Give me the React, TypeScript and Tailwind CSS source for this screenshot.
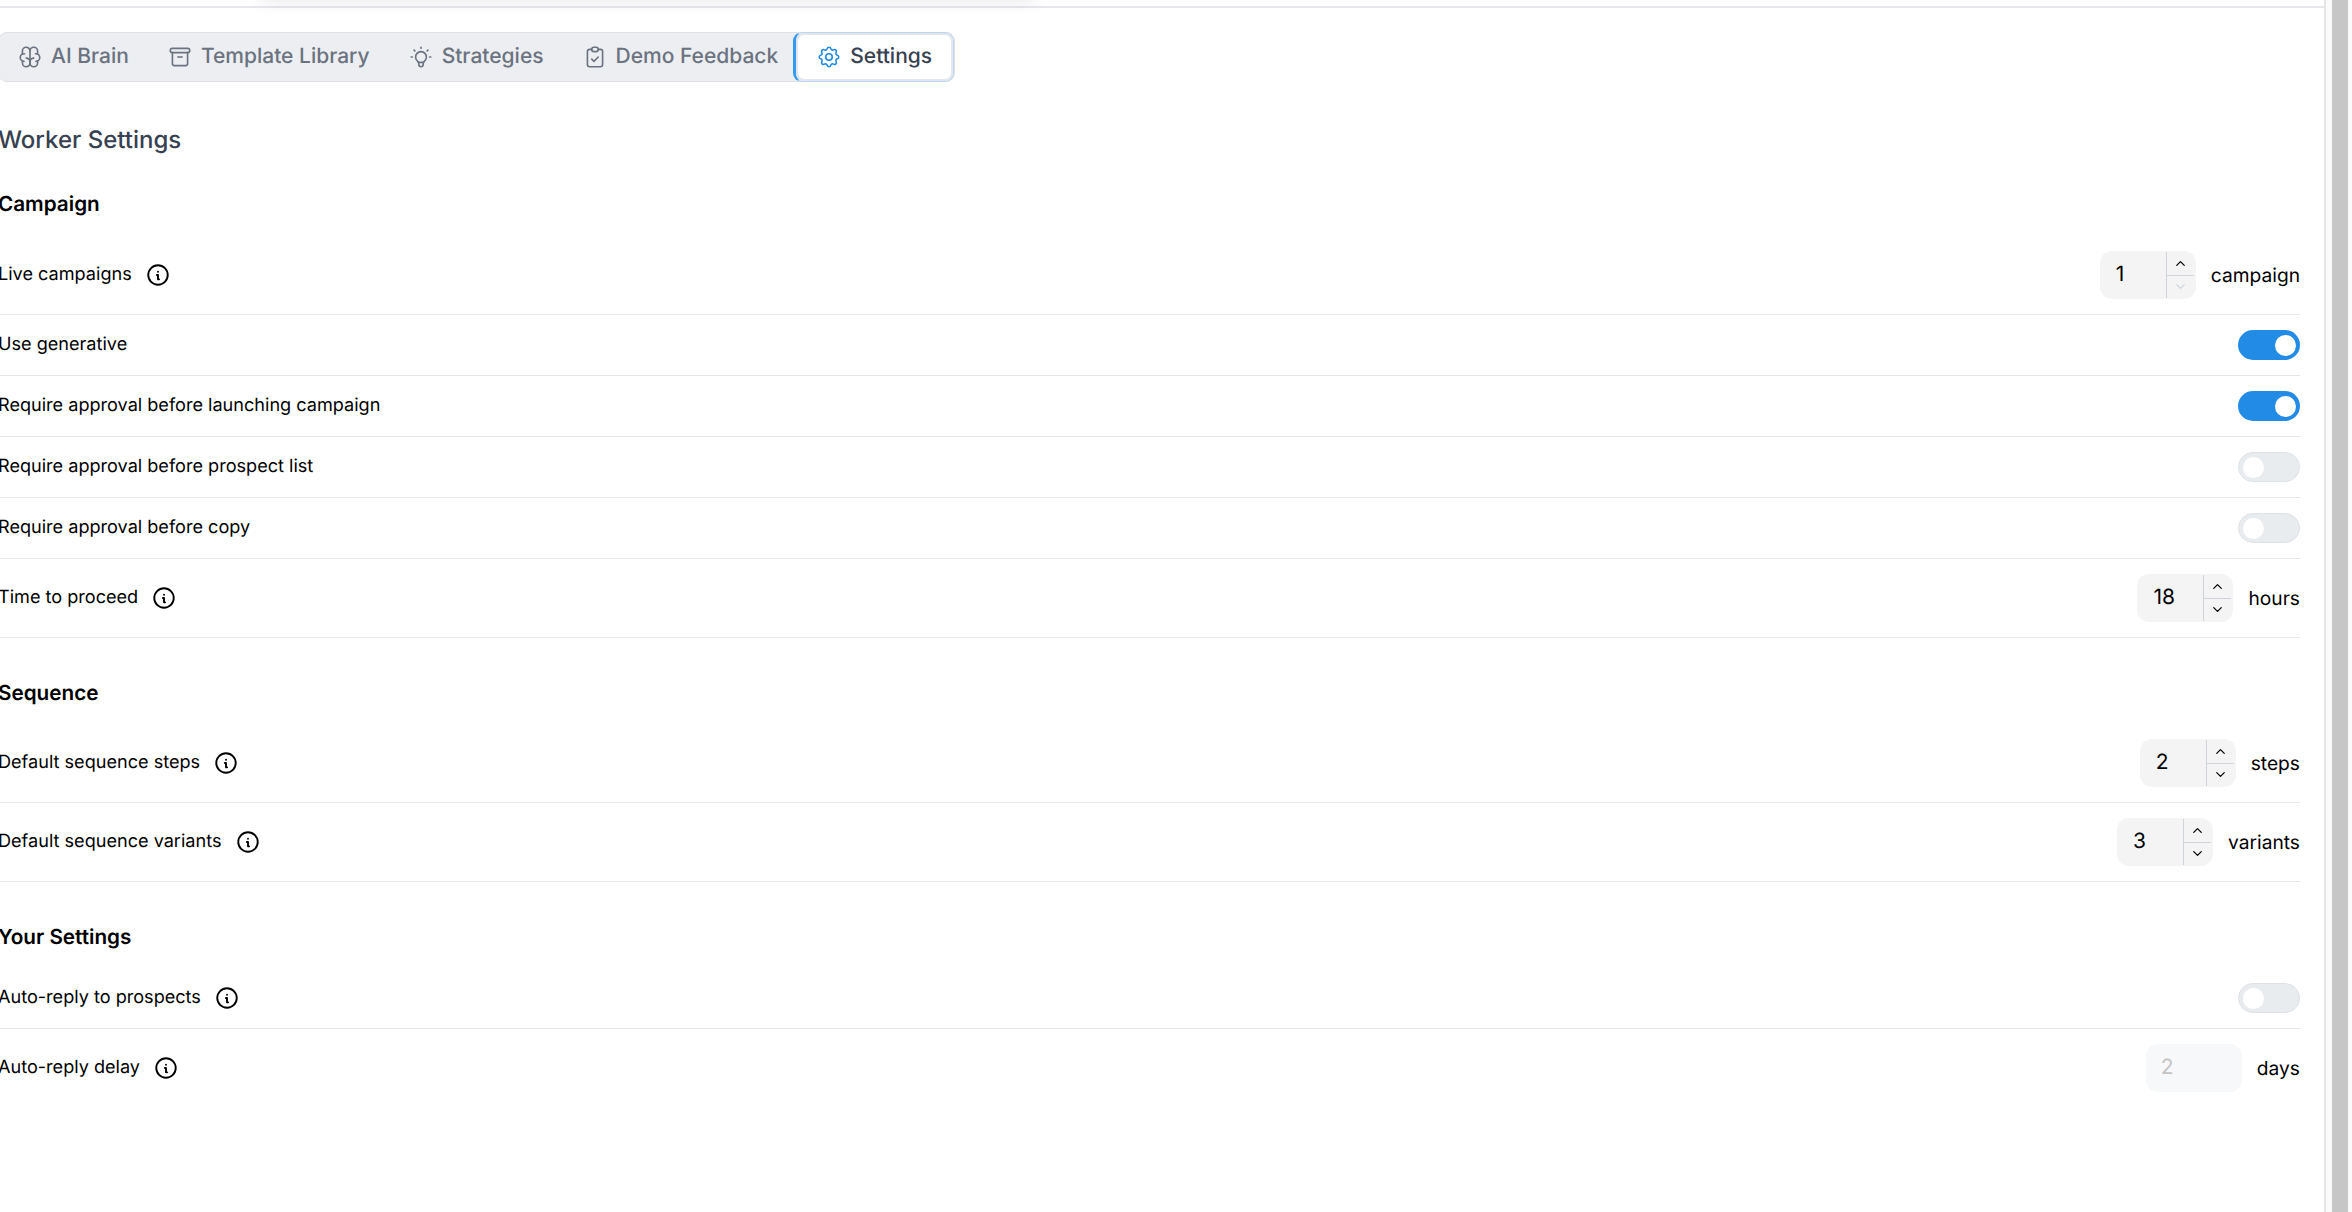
import React from 'react';
import { TbBrain, TbArchive, TbBulb, TbClipboardCheck, TbSettings, TbInfoCircle, TbChevronUp, TbChevronDown } from 'react-icons/tb';

const tabs = [
    { label: 'AI Brain', icon: TbBrain, pad: 'pr-[20px]' },
    { label: 'Template Library', icon: TbArchive, pad: 'pr-[20px]' },
    { label: 'Strategies', icon: TbBulb, pad: 'pr-[20px]' },
    { label: 'Demo Feedback', icon: TbClipboardCheck, pad: 'pr-[15px]' },
];

const Info = () => <TbInfoCircle className="ml-[13px] text-black" size={26} strokeWidth={1.75} />;

const Toggle: React.FC<{ on?: boolean }> = ({ on }) => (
    <div className={on ? 'flex h-[30px] w-[62px] items-center justify-end rounded-full bg-[#228be6] pr-[4px]' : 'flex h-[30px] w-[62px] items-center rounded-full border border-[#dee2e6] bg-[#e9ecef] pl-[4px]'}>
        <div className="h-[21px] w-[21px] rounded-full bg-white" />
    </div>
);

const NumberField: React.FC<{ value: string; unit: string; lockDown?: boolean }> = ({ value, unit, lockDown }) => (
    <div className="flex items-center gap-[15px]">
        <div className="flex h-[48px] w-[96px] items-center rounded-[12px] bg-[#f4f4f5]">
            <span className="flex-1 pl-[16px] text-[21px] text-black">{value}</span>
            <div className="mr-[2px] flex h-[46px] w-[28px] flex-col border-l border-[#ced4da]">
                <div className="flex flex-1 items-center justify-center border-b border-[#ced4da]">
                    <TbChevronUp size={15} className="text-black" />
                </div>
                <div className="flex flex-1 items-center justify-center">
                    <TbChevronDown size={15} className={lockDown ? 'text-[#ced4da]' : 'text-black'} />
                </div>
            </div>
        </div>
        <span className="text-[19.2px] text-black">{unit}</span>
    </div>
);

const Row: React.FC<{ label: string; info?: boolean; children: React.ReactNode }> = ({ label, info, children }) => (
    <div className="flex items-center justify-between border-b border-[#e5e7eb] py-[15px]">
        <div className="flex items-center">
            <span className="text-[18.1px] text-black">{label}</span>
            {info && <Info />}
        </div>
        {children}
    </div>
);

export default function App() {
    return (
        <div className="relative flex h-[1212px] w-full overflow-hidden bg-white font-['Inter',sans-serif] [text-rendering:geometricPrecision]">
            <div className="absolute -top-[20px] left-[260px] h-[20px] w-[775px] shadow-[0_0_18px_rgba(0,0,0,0.1)]" />
            <div className="min-w-0 flex-1 border-r-2 border-[#e5e5e5]">
                <div className="h-[8px] border-b-2 border-[#e5e7eb]" />
                <div className="-ml-[2px] pr-[24px]">
                    <div className="mt-[24px] flex h-[50px] w-max items-center rounded-[9px] border border-[#dee2e6] bg-[#eceef2]">
                        {tabs.map(t => {
                            const Icon = t.icon;
                            return (
                                <div key={t.label} className={'flex items-center gap-[8px] pl-[18px] text-[21px] font-medium text-[#6b7280] ' + t.pad}>
                                    <Icon size={26} strokeWidth={1.5} />
                                    <span>{t.label}</span>
                                </div>
                            );
                        })}
                        <div className="-my-px h-[50px] rounded-[9px] border border-[#b9d7f5] border-l-[3px] border-l-[#339af0]">
                            <div className="flex h-full items-center gap-[8px] rounded-[8px] border-2 border-[#e3e6ec] bg-white pr-[19px] pl-[18px] text-[21px] font-medium text-[#374151]">
                                <TbSettings size={26} strokeWidth={1.5} className="text-[#228be6]" />
                                <span>Settings</span>
                            </div>
                        </div>
                    </div>

                    <h2 className="mt-[42px] text-[24px] leading-[32px] font-medium text-[#374151]">Worker Settings</h2>

                    <h3 className="mt-[32px] text-[20.7px] leading-[32px] font-semibold text-black">Campaign</h3>
                    <div className="mt-[16px]">
                        <Row label="Live campaigns" info><NumberField value="1" unit="campaign" lockDown /></Row>
                        <Row label="Use generative"><Toggle on /></Row>
                        <Row label="Require approval before launching campaign"><Toggle on /></Row>
                        <Row label="Require approval before prospect list"><Toggle /></Row>
                        <Row label="Require approval before copy"><Toggle /></Row>
                        <Row label="Time to proceed" info><NumberField value="18" unit="hours" /></Row>
                    </div>

                    <h3 className="mt-[39px] text-[20.7px] leading-[32px] font-semibold text-black">Sequence</h3>
                    <div className="mt-[15px]">
                        <Row label="Default sequence steps" info><NumberField value="2" unit="steps" /></Row>
                        <Row label="Default sequence variants" info><NumberField value="3" unit="variants" /></Row>
                    </div>

                    <h3 className="mt-[39px] text-[20.7px] leading-[32px] font-semibold text-black">Your Settings</h3>
                    <div className="mt-[15px]">
                        <Row label="Auto-reply to prospects" info><Toggle /></Row>
                        <div className="flex items-center justify-between py-[15px]">
                            <div className="flex items-center">
                                <span className="text-[18.1px] text-black">Auto-reply delay</span>
                                <Info />
                            </div>
                            <div className="flex items-center gap-[15px]">
                                <div className="flex h-[48px] w-[96px] items-center rounded-[12px] bg-[#f7f8f9] pl-[15px] text-[21px] text-[#c4c4c4]">2</div>
                                <span className="text-[19.2px] text-black">days</span>
                            </div>
                        </div>
                    </div>
                </div>
            </div>
            <div className="w-[6px] bg-[#fafafa]" />
            <div className="w-[16px] bg-[#c6c6c6]" />
            <div className="w-[4px] bg-[#fafafa]" />
        </div>
    );
}
